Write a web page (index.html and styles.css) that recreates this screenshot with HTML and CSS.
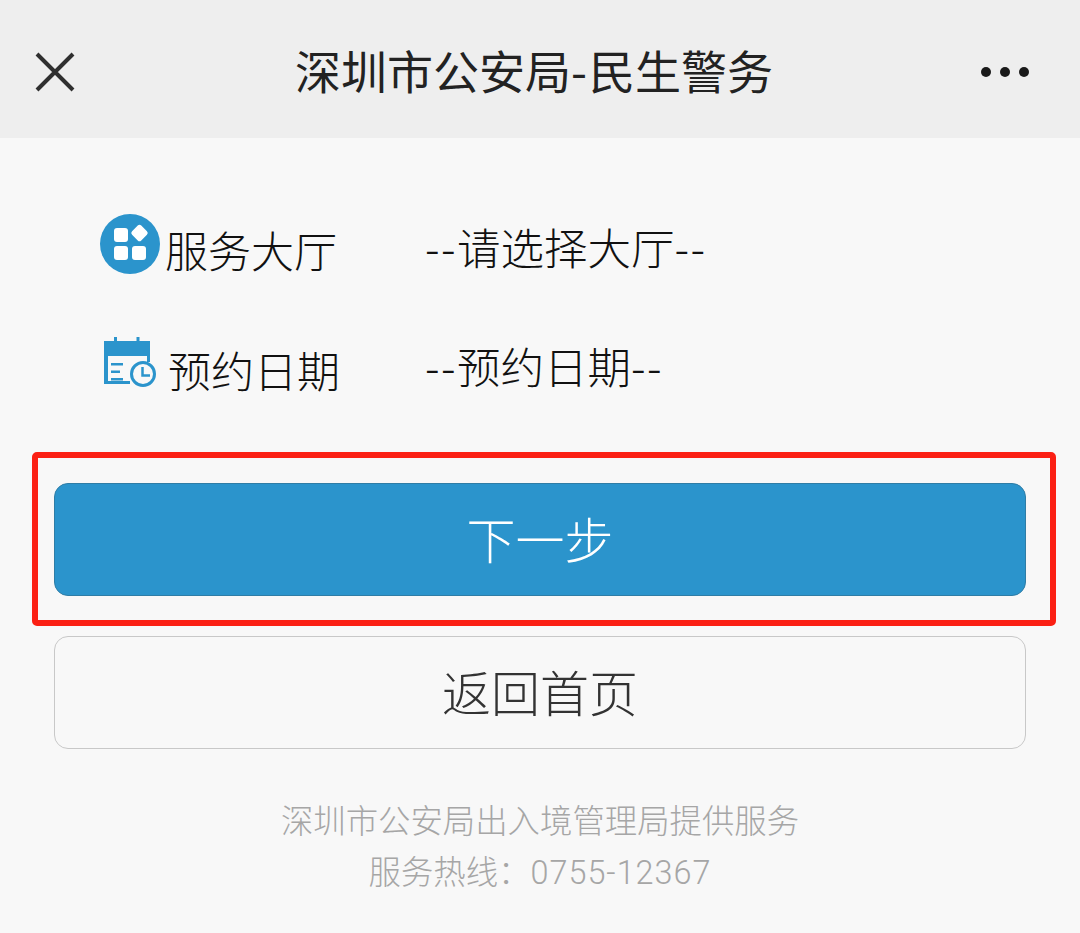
FILE: index.html
```html
<!DOCTYPE html>
<html lang="zh-CN">
<head>
<meta charset="utf-8">
<title>深圳市公安局-民生警务</title>
<link rel="stylesheet" href="styles.css">
</head>
<body>
<header class="navbar">
  <svg class="nav-close" viewBox="0 0 40 40" width="40" height="40"><path d="M2 2 38 38M38 2 2 38" fill="none" stroke="#2f2f2f" stroke-width="4"/></svg>
  <h1 class="nav-title">深圳市公安局<span class="dash">-</span>民生警务</h1>
  <div class="nav-more"><span></span><span></span><span></span></div>
</header>
<main class="content">
  <div class="form">
    <div class="row row-hall">
      <svg class="icon-hall" viewBox="0 0 60 60" width="60" height="60">
        <circle cx="30" cy="30" r="30" fill="#2b94cc"/>
        <rect x="14" y="14" width="14" height="14" rx="3" fill="#fff"/>
        <rect x="14" y="32" width="14" height="14" rx="3" fill="#fff"/>
        <rect x="32" y="32" width="14" height="14" rx="3" fill="#fff"/>
        <rect x="33" y="12.500" width="13" height="13" rx="2.500" fill="#fff" transform="rotate(45 39.500 19)"/>
      </svg>
      <span class="label">服务大厅</span>
      <span class="value"><span class="dash">--</span>请选择大厅<span class="dash">--</span></span>
    </div>
    <div class="row row-date">
      <svg class="icon-date" viewBox="0 0 54 52" width="54" height="52">
        <path d="M1 4H11V0H14V4H33.500V0H36.500V4H47V19H1Z" fill="#2b94cc"/>
        <path d="M1 19H5V44H27V47H1Z" fill="#2b94cc"/>
        <path d="M44 19H47V25H44Z" fill="#2b94cc"/>
        <rect x="8" y="26" width="12" height="2.500" fill="#2b94cc"/>
        <rect x="8" y="33.500" width="9" height="2.500" fill="#2b94cc"/>
        <rect x="8" y="41" width="12" height="2.500" fill="#2b94cc"/>
        <circle cx="40" cy="37" r="11.500" fill="none" stroke="#2b94cc" stroke-width="3"/>
        <path d="M39.500 30V38.500H47" fill="none" stroke="#2b94cc" stroke-width="2.500"/>
      </svg>
      <span class="label">预约日期</span>
      <span class="value"><span class="dash">--</span>预约日期<span class="dash">--</span></span>
    </div>
  </div>
  <div class="actions">
    <button class="btn btn-primary">下一步</button>
    <button class="btn btn-default">返回首页</button>
  </div>
  <footer class="foot">
    <p>深圳市公安局出入境管理局提供服务</p>
    <p>服务热线：<span class="nums">0755-12367</span></p>
  </footer>
</main>
<div class="highlight"></div>
</body>
</html>
```
FILE: styles.css
```css
* { box-sizing: border-box; }
html, body { margin: 0; padding: 0; }
body {
  width: 1080px;
  height: 933px;
  overflow: hidden;
  position: relative;
  background: #f8f8f8;
  font-family: "Noto Sans CJK SC", "Liberation Sans", sans-serif;
  color: #111;
}
.navbar {
  height: 138px;
  background: #eeeeee;
  display: flex;
  align-items: center;
  justify-content: space-between;
  padding: 0 51px 0 35px;
}
.nav-close { display: block; margin-top: 6px; }
.nav-title {
  margin: 0 0 0 12px;
  font-size: 46px;
  line-height: 60px;
  font-weight: 400;
  color: #222;
}
.nav-title .dash { letter-spacing: 2px; }
.nav-more { display: flex; gap: 9px; margin-top: 6px; }
.nav-more span { width: 10px; height: 10px; border-radius: 50%; background: #1a1a1a; }
.content { padding: 76px 54px 0; }
.form { display: flex; flex-direction: column; }
.row { display: flex; align-items: flex-start; font-size: 43.500px; font-weight: 300; }
.row-hall { height: 123px; padding-left: 46px; }
.row-date { height: 146px; padding-left: 49px; }
.icon-hall { flex: none; }
.icon-date { flex: none; }
.label { line-height: 60px; font-size: 43px; }
.row-hall .label { margin: 5px 0 0 5px; }
.row-date .label { margin: 2px 0 0 11px; }
.value { line-height: 60px; }
.value .dash { letter-spacing: 1.500px; }
.row-hall .value { margin: 3px 0 0 88px; }
.row-date .value { margin: -1px 0 0 85px; }
.actions { display: flex; flex-direction: column; gap: 40px; }
.btn {
  display: block;
  width: 972px;
  height: 113px;
  border-radius: 14px;
  font-family: inherit;
  font-size: 49px;
  line-height: 107px;
  font-weight: 300;
  padding: 0 0 6px;
}
.btn-primary { background: #2b94cc; border: 1px solid #2f7da6; color: #fff; }
.btn-default { background: #f8f8f8; border: 1px solid #c8c8c8; color: #333; }
.foot { margin-top: 44px; text-align: center; color: #a6a6a6; font-size: 32.400px; font-weight: 300; }
.foot p { margin: 0; line-height: 51px; }
.nums { font-family: Roboto, "Liberation Sans", sans-serif; font-weight: 300; letter-spacing: 1px; }
.highlight {
  position: absolute;
  left: 32px;
  top: 452px;
  width: 1024px;
  height: 174px;
  border: 6px solid #fb2014;
  border-radius: 5px;
}
```
